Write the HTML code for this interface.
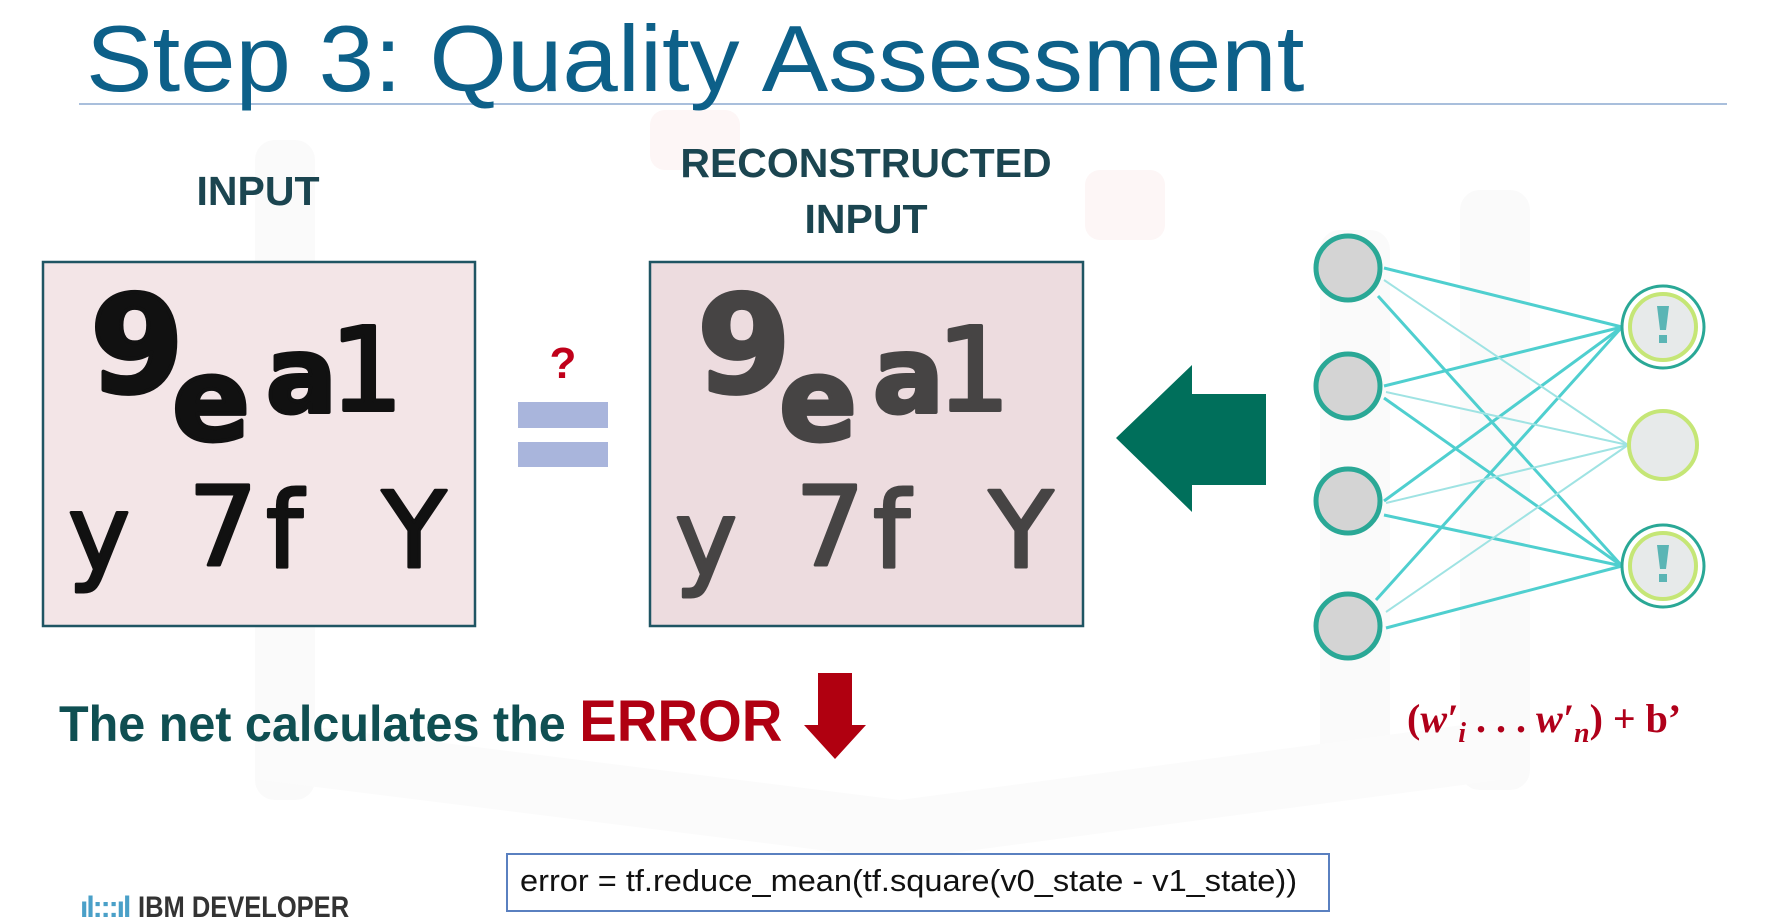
<!DOCTYPE html>
<html><head><meta charset="utf-8"><style>
html,body{margin:0;padding:0;width:1776px;height:914px;overflow:hidden;background:#fff;font-family:"Liberation Sans",sans-serif}
.a{position:absolute;white-space:nowrap}
</style></head><body>
<svg class="a" style="left:0;top:0" width="1776" height="914">
 <g fill="#fafafa">
  <rect x="255" y="140" width="60" height="660" rx="20"/>
  <rect x="1320" y="230" width="70" height="560" rx="20"/>
  <rect x="1460" y="190" width="70" height="600" rx="20"/>
  <rect x="650" y="110" width="90" height="60" rx="15" fill="#fdf6f6"/>
  <rect x="1085" y="170" width="80" height="70" rx="15" fill="#fdf6f6"/>
  <path d="M260 720 L900 800 L1500 720 L1500 780 L900 860 L260 780Z" fill="#fbfbfb"/>
 </g>
 <line x1="79" y1="104" x2="1727" y2="104" stroke="#a9bfdc" stroke-width="2"/>
 <rect x="43" y="262" width="432" height="364" fill="#f3e5e7" stroke="#1f5563" stroke-width="2.5"/>
 <rect x="650" y="262" width="433" height="364" fill="#eddcdf" stroke="#1f5563" stroke-width="2.5"/>
 <g font-family="DejaVu Sans" font-weight="bold" fill="#111" stroke="#111" stroke-width="4" stroke-linejoin="round">
  <text x="90" y="392" font-size="135">9</text>
  <text x="172" y="440" font-size="115">e</text>
  <text x="266" y="412" font-size="105">a</text>
  <text x="330" y="410" font-size="115" font-weight="normal">1</text>
  <text x="68" y="570" font-size="105" font-weight="normal" stroke-width="3">y</text>
  <text x="188" y="565" font-size="110" font-weight="normal" stroke-width="3">7</text>
  <text x="266" y="567" font-size="105" font-weight="normal" stroke-width="3">f</text>
  <text x="382" y="567" font-size="105" font-weight="normal" stroke-width="3">Y</text>
 </g>
 <g font-family="DejaVu Sans" font-weight="bold" fill="#2a2a2a" stroke="#2a2a2a" stroke-width="4" stroke-linejoin="round" opacity="0.85">
  <text x="697" y="392" font-size="135">9</text>
  <text x="779" y="440" font-size="115">e</text>
  <text x="873" y="412" font-size="105">a</text>
  <text x="937" y="410" font-size="115" font-weight="normal">1</text>
  <text x="675" y="575" font-size="105" font-weight="normal" stroke-width="3">y</text>
  <text x="795" y="565" font-size="110" font-weight="normal" stroke-width="3">7</text>
  <text x="873" y="567" font-size="105" font-weight="normal" stroke-width="3">f</text>
  <text x="989" y="567" font-size="105" font-weight="normal" stroke-width="3">Y</text>
 </g>
 <rect x="518" y="402" width="90" height="26" fill="#a9b5dc"/>
 <rect x="518" y="442" width="90" height="25" fill="#a9b5dc"/>
 <text x="563" y="378" font-size="44" font-weight="bold" fill="#c0001a" text-anchor="middle" font-family="Liberation Sans">?</text>
 <path d="M1116 438 L1192 365 L1192 394 L1266 394 L1266 485 L1192 485 L1192 512Z" fill="#006f5b"/>
 <path d="M818 673 L852 673 L852 725 L866 725 L835 759 L804 725 L818 725Z" fill="#b00010"/>
 <g stroke="#4fcfcf">
  <g stroke-width="3">
  <line x1="1622" y1="327" x2="1384" y2="268"/>
  <line x1="1622" y1="327" x2="1384" y2="386"/>
  <line x1="1622" y1="327" x2="1384" y2="501"/>
  <line x1="1622" y1="327" x2="1376" y2="600"/>
  <line x1="1622" y1="566" x2="1378" y2="296"/>
  <line x1="1622" y1="566" x2="1384" y2="398"/>
  <line x1="1622" y1="566" x2="1384" y2="515"/>
  <line x1="1622" y1="566" x2="1386" y2="628"/>
  </g>
  <g stroke="#9fe3e3" stroke-width="2">
  <line x1="1628" y1="445" x2="1384" y2="280"/>
  <line x1="1628" y1="445" x2="1386" y2="392"/>
  <line x1="1628" y1="445" x2="1386" y2="503"/>
  <line x1="1628" y1="445" x2="1386" y2="612"/>
  </g>
 </g>
 <g fill="#d4d4d4" stroke="#2aa896" stroke-width="5">
  <circle cx="1348" cy="268" r="32"/>
  <circle cx="1348" cy="386" r="32"/>
  <circle cx="1348" cy="501" r="32"/>
  <circle cx="1348" cy="626" r="32"/>
 </g>
 <g>
  <circle cx="1663" cy="327" r="41" fill="#fff" stroke="#2aa896" stroke-width="3"/>
  <circle cx="1663" cy="327" r="33" fill="#e7eaea" stroke="#c5e676" stroke-width="4"/>
  <circle cx="1663" cy="445" r="34" fill="#e7eaea" stroke="#c5e676" stroke-width="4"/>
  <circle cx="1663" cy="566" r="41" fill="#fff" stroke="#2aa896" stroke-width="3"/>
  <circle cx="1663" cy="566" r="33" fill="#e7eaea" stroke="#c5e676" stroke-width="4"/>
  <path d="M1657 306 h12 l-3 24 h-6z M1659 335 h8 v8 h-8z" fill="#5bb5b5"/>
  <path d="M1657 545 h12 l-3 24 h-6z M1659 574 h8 v8 h-8z" fill="#5bb5b5"/>
 </g>
 <text x="1407" y="732" font-family="Liberation Serif" font-weight="bold" font-size="40" fill="#b0001a">(<tspan font-style="italic">w′</tspan><tspan font-style="italic" font-size="28" dy="10">i</tspan><tspan dy="-10"> . . . </tspan><tspan font-style="italic">w′</tspan><tspan font-style="italic" font-size="28" dy="10">n</tspan><tspan dy="-10">) + b’</tspan></text>
</svg>
<div class="a" style="left:86px;top:4px;font-size:94px;color:#0d6089;line-height:110px;transform:scaleX(1.06);transform-origin:left">Step 3: Quality Assessment</div>
<div class="a" style="left:258px;top:168px;font-size:41px;font-weight:bold;color:#1b4550;transform:translateX(-50%) scaleX(1.0)">INPUT</div>
<div class="a" style="left:866px;top:140px;font-size:41px;font-weight:bold;color:#1b4550;transform:translateX(-50%) scaleX(1.0)">RECONSTRUCTED</div>
<div class="a" style="left:866px;top:196px;font-size:41px;font-weight:bold;color:#1b4550;transform:translateX(-50%) scaleX(1.0)">INPUT</div>
<div class="a" style="left:59px;top:688px;font-size:50px;font-weight:bold;color:#0f4f52;transform:scaleX(0.97);transform-origin:left">The net calculates the <span style="color:#b00012;font-size:58px">ERROR</span></div>
<div class="a" style="left:506px;top:853px;width:820px;height:55px;border:2px solid #5a80c0;background:#fff"></div>
<div class="a" style="left:520px;top:863px;font-size:31px;color:#111;transform:scaleX(1.05);transform-origin:left">error = tf.reduce_mean(tf.square(v0_state - v1_state))</div>
<div class="a" style="left:80px;top:893px;font-size:30px;font-weight:bold;color:#333;line-height:30px"><span style="color:#4aa0c8;letter-spacing:-2px">ıl:::ıl</span> <span style="display:inline-block;transform:scaleX(0.85);transform-origin:left">IBM DEVELOPER</span></div>
</body></html>
